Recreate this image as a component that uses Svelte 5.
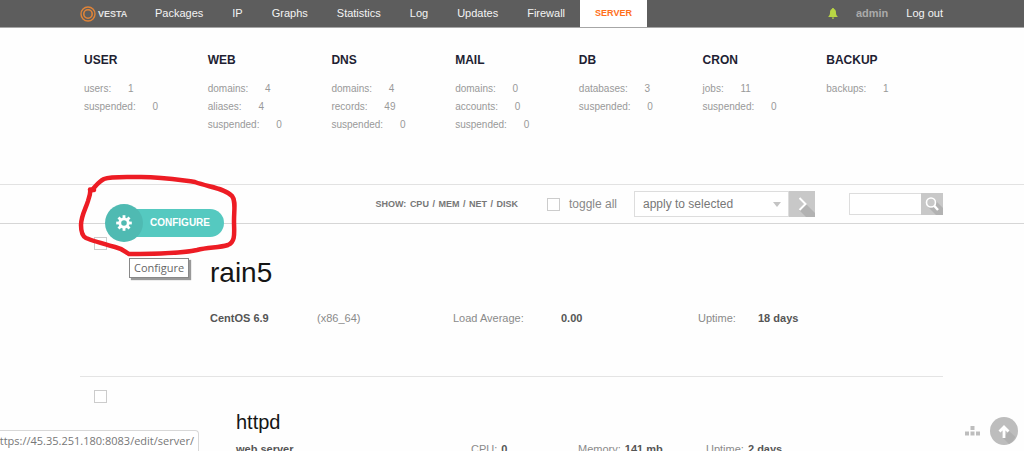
<script>
  const menu = ['Packages', 'IP', 'Graphs', 'Statistics', 'Log', 'Updates', 'Firewall']

  const stats = [
    { title: 'USER', rows: [['users', 1], ['suspended', 0]] },
    { title: 'WEB', rows: [['domains', 4], ['aliases', 4], ['suspended', 0]] },
    { title: 'DNS', rows: [['domains', 4], ['records', 49], ['suspended', 0]] },
    { title: 'MAIL', rows: [['domains', 0], ['accounts', 0], ['suspended', 0]] },
    { title: 'DB', rows: [['databases', 3], ['suspended', 0]] },
    { title: 'CRON', rows: [['jobs', 11], ['suspended', 0]] },
    { title: 'BACKUP', rows: [['backups', 1]] },
  ]

  const teeth = [0, 45, 90, 135, 180, 225, 270, 315]

  let all = $state(false)
  let host = $state(false)
  let httpd = $state(false)
  let query = $state('')

  function toggleAll() {
    host = all
    httpd = all
  }
</script>

<div class="page">
  <header class="top">
    <a class="logo" href="/list/user/">
      <svg width="16" height="16" viewBox="0 0 16 16" fill="none" stroke="#e08438" aria-hidden="true">
        <circle cx="8" cy="8" r="7" stroke-width="1.4" />
        <circle cx="8" cy="8" r="4.2" stroke-width="1.6" />
      </svg>
      <span>VESTA</span>
    </a>
    <nav>
      {#each menu as item}
        <a href="/list/{item.toLowerCase()}/">{item}</a>
      {/each}
      <a class="active" href="/list/server/">SERVER</a>
    </nav>
    <div class="account">
      <button class="bell" aria-label="Notifications">
        <svg width="10" height="11" viewBox="0 0 10 11" fill="#b9d644">
          <path d="M5 0C5.7 0 6 .5 6 1C7.6 1.5 8 3 8 4.8C8 6.8 8.6 7.6 9.6 8.5V9H.4V8.500C1.400 7.600 2 6.800 2 4.800C2 3 2.400 1.500 4 1C4 .5 4.300 0 5 0ZM3.800 9.600H6.200C6.100 10.500 5.600 11 5 11S3.900 10.500 3.800 9.600Z" />
        </svg>
      </button>
      <a class="user" href="/edit/user/">admin</a>
      <a href="/logout/">Log out</a>
    </div>
  </header>

  <section class="stats">
    {#each stats as stat}
      <div>
        <h2>{stat.title}</h2>
        <ul>
          {#each stat.rows as [label, value]}
            <li>{label}: <span>{value}</span></li>
          {/each}
        </ul>
      </div>
    {/each}
  </section>

  <div class="toolbar">
    <div class="tools">
      <div class="show">SHOW: <a href="#cpu">CPU</a> / <a href="#mem">MEM</a> / <a href="#net">NET</a> / <a href="#disk">DISK</a></div>
      <label class="toggle">
        <input type="checkbox" bind:checked={all} onchange={toggleAll} />
        toggle all
      </label>
      <form class="apply">
        <select aria-label="Action">
          <option>apply to selected</option>
          <option>restart</option>
          <option>stop</option>
        </select>
        <svg class="caret" width="8" height="5" viewBox="0 0 8 5" aria-hidden="true"><path d="M0 0H8L4 5Z" fill="#c4c4c4" /></svg>
        <button type="button" aria-label="Apply">
          <svg width="26" height="26" viewBox="0 0 26 26">
            <path d="M17 13L26 22V26H17L10 19Z" fill="#b2b2b2" />
            <path d="M10.500 7L16.500 13L10.500 19" fill="none" stroke="#fff" stroke-width="2" />
          </svg>
        </button>
      </form>
      <form class="search">
        <input type="text" aria-label="Search" bind:value={query} />
        <button type="button" aria-label="Search">
          <svg width="22" height="22" viewBox="0 0 22 22">
            <path d="M14 7L22 15V22H15L7 14Z" fill="#b2b2b2" />
            <circle cx="10" cy="9.500" r="4.500" fill="#c8c8c8" stroke="#fff" stroke-width="1.600" />
            <path d="M13.200 12.800L17 17" stroke="#fff" stroke-width="2.400" />
          </svg>
        </button>
      </form>
    </div>

    <a class="configure" href="/edit/server/">
      <span class="gear">
        <svg width="16" height="16" viewBox="-8 -8 16 16">
          <circle r="4.200" fill="none" stroke="#fff" stroke-width="2.800" />
          {#each teeth as angle}
            <rect x="-1.400" y="-7.800" width="2.800" height="3.200" fill="#fff" transform="rotate({angle})" />
          {/each}
        </svg>
      </span>
      <span class="label">CONFIGURE</span>
    </a>
    <div class="tip" role="tooltip">Configure</div>
    <svg class="scribble" width="160" height="84" viewBox="78 172 160 84" fill="none" stroke="#ed1c24" stroke-width="4.500" stroke-linecap="round" stroke-linejoin="round" aria-hidden="true">
      <path d="M94 189L90 188.500C91 192 89 196 88 200C86 207 81 215 81 224C81 231 82 235 86 237C93 240 104 243 115 246C123 248 124 250 129 253C150 253 177 253 197 249C209 246 219 247 228 244C236 241 234 231 234 220C234 208 236 200 232 195C225 187 208 186 195 181C179 179 165 176 141 176C126 176 111 175 104 178C98 181 96 185 91 190" />
    </svg>
  </div>

  <main>
    <article class="host">
      <input type="checkbox" aria-label="rain5" bind:checked={host} />
      <div class="info">
        <h1>rain5</h1>
        <div class="details">
          <b>CentOS 6.9</b>
          <span>(x86_64)</span>
          <span>Load Average:</span>
          <b>0.00</b>
          <span>Uptime:</span>
          <b>18 days</b>
        </div>
      </div>
    </article>
    <article class="service">
      <input type="checkbox" aria-label="httpd" bind:checked={httpd} />
      <div class="info">
        <h1>httpd</h1>
        <div class="details">
          <b>web server</b>
          <span>CPU: <b>0</b></span>
          <span>Memory: <b>141 mb</b></span>
          <span>Uptime: <b>2 days</b></span>
        </div>
      </div>
    </article>
  </main>

  <div class="status">https://45.35.251.180:8083/edit/server/</div>

  <div class="corner">
    <button aria-label="Shortcuts">
      <svg width="15" height="10" viewBox="0 0 15 10" fill="#bdbdbd">
        <path d="M5.500 0H9.500V4H5.500ZM0 5.500H4V9.500H0ZM5.500 5.500H9.500V9.500H5.500ZM11 5.500H15V9.500H11Z" />
      </svg>
    </button>
    <button aria-label="Back to top">
      <svg width="28" height="28" viewBox="0 0 28 28">
        <circle cx="14" cy="14" r="14" fill="#bdbdbd" />
        <path d="M19 14L25.500 20A14 14 0 0 1 19 27L13 21Z" fill="#b0b0b0" />
        <path d="M14 21V11M9.500 14.500L14 10L18.500 14.500" fill="none" stroke="#fff" stroke-width="2.800" />
      </svg>
    </button>
  </div>
</div>

<style>
  :global(body) {
    background: #fefefe;
    overflow: hidden;
  }
  .page {
    height: 100vh;
    overflow: hidden;
    font: 11px "Liberation Sans", Arial, sans-serif;
    color: #8a8a8a;
  }
  a {
    color: inherit;
    text-decoration: none;
  }
  button {
    padding: 0;
    border: 0;
    background: none;
    cursor: pointer;
  }
  svg {
    display: block;
  }
  h1, h2, ul {
    margin: 0;
    padding: 0;
    list-style: none;
  }

  .top {
    display: flex;
    height: 27px;
    padding: 0 81px 0 80px;
    background: #5d5d5d;
    border-bottom: 1px solid #a6a6a6;
    color: #f4f4f4;
    line-height: 26px;
  }
  .logo {
    display: flex;
    align-items: center;
    gap: 2px;
    width: 75px;
    font-size: 9px;
    font-weight: bold;
    color: #e4e4e4;
  }
  nav {
    display: flex;
    gap: 29px;
  }
  nav .active {
    margin-left: -14px;
    padding: 0 15px;
    background: #fff;
    color: #ff6f1a;
    font-size: 9px;
    font-weight: bold;
    line-height: 27px;
  }
  .account {
    display: flex;
    gap: 18px;
    margin-left: auto;
  }
  .bell {
    align-self: center;
  }
  .user {
    color: #aaa;
    font-weight: bold;
  }

  .stats {
    display: grid;
    grid-template-columns: repeat(7, 1fr);
    min-height: 132px;
    margin: 0 74px 0 84px;
    padding-top: 24px;
    font-size: 10px;
    color: #999;
  }
  .stats h2 {
    margin-bottom: 12px;
    font-size: 12px;
    line-height: 16px;
    color: #1f1f33;
  }
  .stats li {
    line-height: 18px;
  }
  .stats li span {
    margin-left: 14px;
  }

  .toolbar {
    position: relative;
    border-top: 1px solid #e2e2e2;
    border-bottom: 1px solid #d6d6d6;
  }
  .tools {
    display: flex;
    align-items: center;
    justify-content: flex-end;
    height: 38px;
    margin: 0 81px 0 80px;
  }
  .show {
    font-size: 9px;
    font-weight: bold;
    color: #777;
  }
  .show a {
    margin: 0 1px;
  }
  input[type="checkbox"] {
    appearance: none;
    flex: none;
    box-sizing: border-box;
    width: 13px;
    height: 13px;
    margin: 0;
    border: 1px solid #ccc;
    background: #fff;
  }
  input[type="checkbox"]:checked {
    background: #55c9c0;
  }
  .toggle {
    display: flex;
    align-items: center;
    gap: 9px;
    margin: 0 17px 0 28px;
    font-size: 12px;
    color: #888;
  }
  .apply {
    position: relative;
    display: flex;
    width: 181px;
    margin-right: 34px;
  }
  .apply select {
    appearance: none;
    flex: 1;
    box-sizing: border-box;
    height: 26px;
    padding: 0 8px;
    border: 1px solid #ddd;
    border-radius: 0;
    background: #fff;
    font: 12px "Liberation Sans", Arial, sans-serif;
    color: #777;
  }
  .caret {
    position: absolute;
    right: 34px;
    top: 11px;
    pointer-events: none;
  }
  .apply button, .search button {
    background: #c8c8c8;
  }
  .search {
    display: flex;
    width: 94px;
  }
  .search input {
    flex: 1;
    min-width: 0;
    box-sizing: border-box;
    height: 22px;
    border: 1px solid #ddd;
    border-right: 0;
    background: #fff;
  }

  .configure {
    position: absolute;
    z-index: 2;
    left: 105px;
    top: 19px;
    display: flex;
    align-items: center;
    color: #fff;
  }
  .gear {
    z-index: 1;
    display: grid;
    place-items: center;
    width: 38px;
    height: 38px;
    border-radius: 50%;
    background: #4fbab2;
  }
  .label {
    margin-left: -19px;
    padding: 0 14px 0 26px;
    border-radius: 0 14px 14px 0;
    background: #55c9c0;
    font-size: 10px;
    font-weight: bold;
    line-height: 28px;
  }
  .tip {
    position: absolute;
    z-index: 2;
    left: 129px;
    top: 73px;
    padding: 0 4px;
    border: 1px solid #888;
    background: #fff;
    box-shadow: 2px 2px 1px #999;
    font: 11px/18px "Open Sans", sans-serif;
    color: #666;
  }
  .scribble {
    position: absolute;
    z-index: 3;
    left: 78px;
    top: -12px;
    pointer-events: none;
  }

  main {
    margin: 0 81px 0 80px;
  }
  article {
    display: flex;
    align-items: flex-start;
    padding: 13px 0 0 14px;
  }
  .host {
    min-height: 139px;
    border-bottom: 1px solid #e4e4e4;
  }
  h1 {
    font-weight: normal;
    color: #151515;
  }
  .host h1 {
    font-size: 28px;
    line-height: 32px;
  }
  .service h1 {
    font-size: 20px;
    line-height: 24px;
  }
  .host .info {
    flex: 1;
    margin: 20px 0 0 103px;
  }
  .service .info {
    flex: 1;
    margin: 20px 0 0 129px;
  }
  .details {
    display: grid;
    line-height: 16px;
  }
  .details b {
    color: #555;
  }
  .host .details {
    grid-template-columns: 107px 136px 108px 137px 60px 1fr;
    margin-top: 21px;
  }
  .service .details {
    grid-template-columns: 235px 107px 128px 1fr;
    margin-top: 7px;
  }
  .service span b {
    margin-left: 1px;
  }

  .status {
    position: fixed;
    left: -8px;
    bottom: 0;
    padding: 0 4px 0 0;
    border: 1px solid #d8d8d8;
    border-bottom: 0;
    border-top-right-radius: 4px;
    background: #fff;
    font: 11px/20px "Open Sans", sans-serif;
    color: #777;
  }
  .corner {
    position: fixed;
    right: 6px;
    bottom: 6px;
    display: flex;
    align-items: center;
    gap: 10px;
  }
</style>
